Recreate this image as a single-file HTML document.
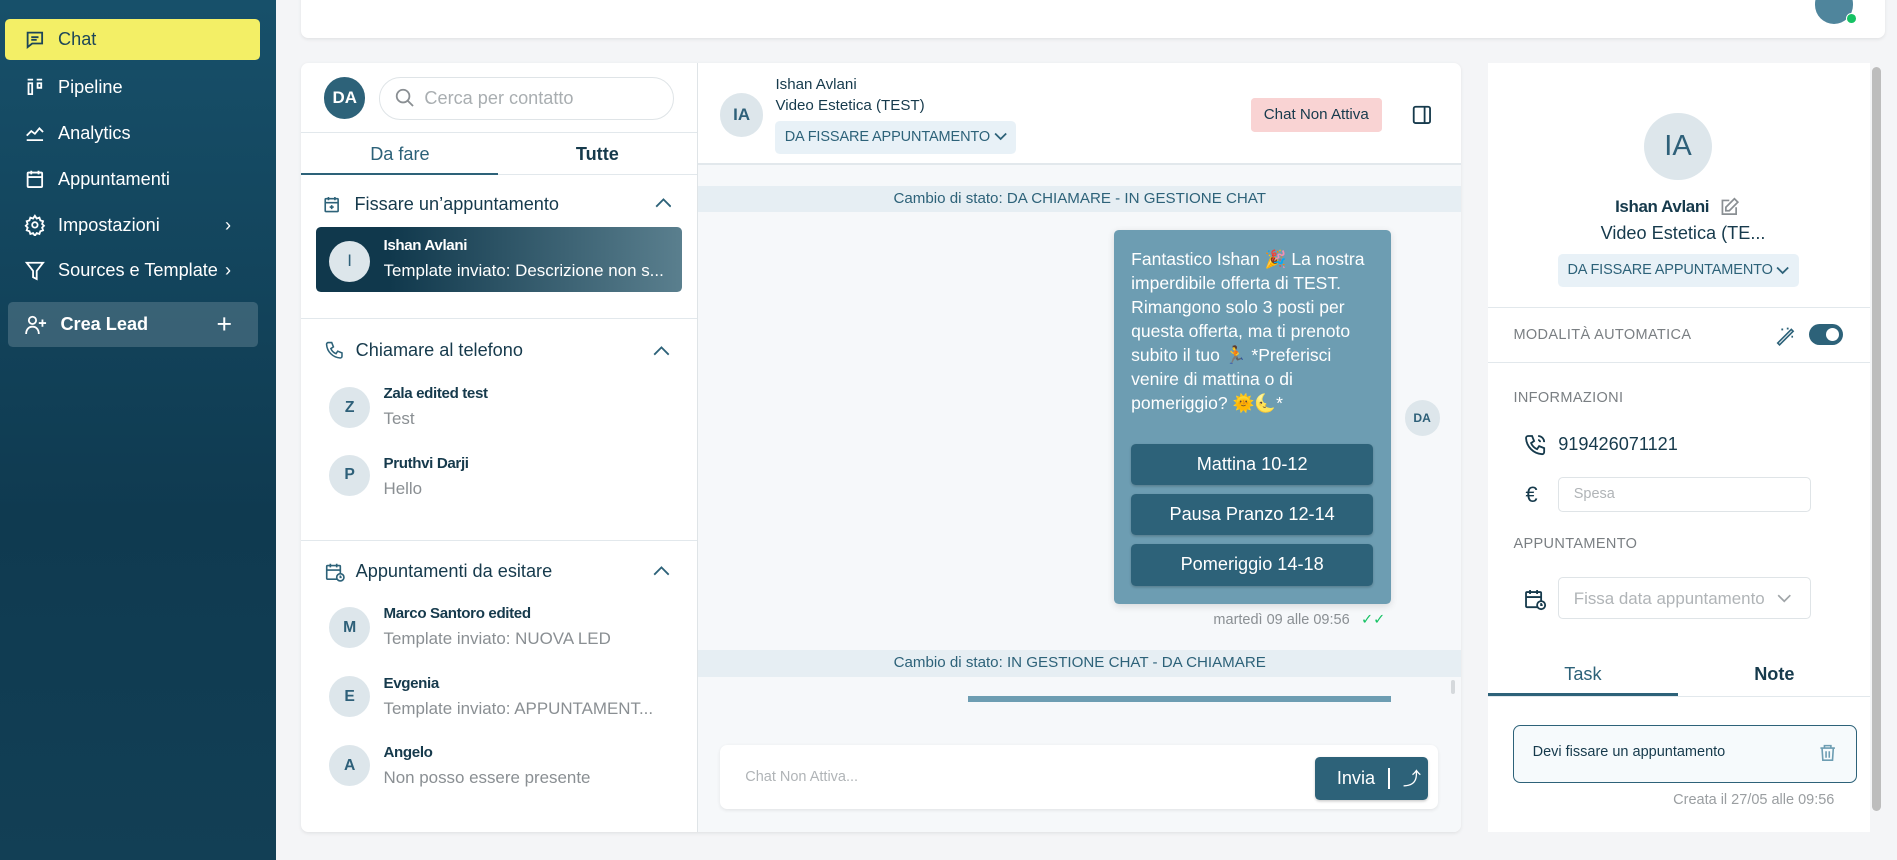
<!DOCTYPE html>
<html><head><meta charset="utf-8"><style>
*{box-sizing:border-box;margin:0;padding:0}
html,body{width:1897px;height:860px;overflow:hidden;background:#f4f5f7}
#r{zoom:1.2098;width:1568px;height:711px;position:relative;font-family:"Liberation Sans",sans-serif;color:#163a4c}
.a{position:absolute;white-space:nowrap}
.side{left:0;top:0;width:228px;height:711px;background:linear-gradient(180deg,#17506a,#0f3a50 60%,#123f55)}
.nav{left:4px;width:211px;height:34px;display:flex;align-items:center;padding-left:16px;color:#fff;font-size:15px}
.nav svg{margin-right:10px}
.card{background:#fff;border-radius:6px;box-shadow:0 1px 3px rgba(0,0,0,.08)}
.av{border-radius:50%;background:#dde6eb;color:#2e6079;display:flex;align-items:center;justify-content:center;font-weight:bold}
.ln{background:#e2e8ec}
.nm{font-weight:bold;font-size:12.5px;color:#163a4c;letter-spacing:-.3px}
.sub{font-size:14px;color:#8a8f93}
.btn{background:#2d6279;color:#fff;border-radius:4px;display:flex;align-items:center;justify-content:center;font-size:15px;box-shadow:0 1px 2px rgba(0,0,0,.2)}
.lab{font-size:12px;color:#7a7f83;letter-spacing:.3px}
.pill{height:27px;background:#e8f1f7;border-radius:4px;font-size:12px;color:#2d6279;display:flex;align-items:center;justify-content:center;gap:3px;letter-spacing:-.1px}
</style></head><body><div id="r">
<div class="a side"></div>
<div class="a nav" style="top:16px;background:#f3ef66;border-radius:4px;color:#1d4658">
<svg width="18" height="18" viewBox="0 0 24 24" fill="none" stroke="#1d4658" stroke-width="2"><path d="M4 4h16v12H9l-5 4z"/><path d="M8 9h8M8 12h6"/></svg>Chat</div>
<div class="a nav" style="top:55px"><svg width="18" height="18" viewBox="0 0 24 24" fill="none" stroke="#fff" stroke-width="2"><path d="M4 4h6M14 4h6M5 8h4v12H5zM15 8h4v5h-4z"/></svg>Pipeline</div>
<div class="a nav" style="top:93px"><svg width="18" height="18" viewBox="0 0 24 24" fill="none" stroke="#fff" stroke-width="2"><path d="M3 15l5-5 4 3 5-6 4 4M3 20h18"/></svg>Analytics</div>
<div class="a nav" style="top:131px"><svg width="18" height="18" viewBox="0 0 24 24" fill="none" stroke="#fff" stroke-width="2"><rect x="4" y="5" width="16" height="16" rx="1"/><path d="M4 10h16M8 3v4M16 3v4"/></svg>Appuntamenti</div>
<div class="a nav" style="top:169px"><svg width="18" height="18" viewBox="0 0 24 24" fill="none" stroke="#fff" stroke-width="2"><circle cx="12" cy="12" r="3"/><path d="M12 2l2 3 3-1 1 3 3 1-1 3 2 2-2 2 1 3-3 1-1 3-3-1-2 3-2-3-3 1-1-3-3-1 1-3-2-2 2-2-1-3 3-1 1-3 3 1z"/></svg>Impostazioni<span style="position:absolute;left:182px">›</span></div>
<div class="a nav" style="top:207px"><svg width="18" height="18" viewBox="0 0 24 24" fill="none" stroke="#fff" stroke-width="2"><path d="M3 3h18l-7 9v9l-4-2v-7z"/></svg>Sources e Template<span style="position:absolute;left:182px">›</span></div>
<div class="a nav" style="top:250px;left:7px;width:206px;height:37px;background:rgba(255,255,255,.17);border-radius:4px;padding-left:13px"><svg width="20" height="18" viewBox="0 0 26 24" fill="none" stroke="#fff" stroke-width="2"><circle cx="9" cy="7" r="4"/><path d="M2 22c0-5 3-8 7-8s7 3 7 8M20 6v8M16 10h8"/></svg><span style="font-weight:bold">Crea Lead</span><span style="position:absolute;left:172px;font-size:22px;font-weight:300">+</span></div>

<div class="a card" style="left:249px;top:-8px;width:1309px;height:39px"></div>
<div class="a" style="left:1500px;top:-12px;width:32px;height:32px;border-radius:50%;background:#4f859c"></div>
<div class="a" style="left:1526px;top:11px;width:9px;height:9px;border-radius:50%;background:#16c264;border:1px solid #fff"></div>

<div class="a card" style="left:249px;top:52px;width:959px;height:636px"></div>
<div class="a av" style="left:268px;top:64px;width:34px;height:34px;background:#2d6279;color:#fff;font-size:14px">DA</div>
<div class="a" style="left:313px;top:64px;width:244px;height:35px;border:1px solid #dfe4e7;border-radius:18px;font-size:15px;color:#a9aeb1;padding:8px 0 0 37px">Cerca per contatto</div>
<svg class="a" style="left:326px;top:72px" width="18" height="18" viewBox="0 0 24 24" fill="none" stroke="#8a8f93" stroke-width="2"><circle cx="10" cy="10" r="7"/><path d="M15 15l6 6"/></svg>
<div class="a ln" style="left:249px;top:109px;width:327px;height:1px"></div>
<div class="a" style="left:306px;top:119px;font-size:15px;color:#2d6279">Da fare</div>
<div class="a" style="left:476px;top:119px;font-size:15px;font-weight:bold">Tutte</div>
<div class="a ln" style="left:249px;top:144px;width:327px;height:1px"></div>
<div class="a" style="left:249px;top:143px;width:163px;height:2px;background:#2d6279"></div>
<svg class="a" style="left:266px;top:160px" width="16" height="17" viewBox="0 0 24 24" fill="none" stroke="#2d6279" stroke-width="2"><rect x="4" y="5" width="16" height="16" rx="1"/><path d="M4 10h16M8 3v4M16 3v4M12 13v5M9.5 15.5h5"/></svg>
<div class="a" style="left:293px;top:160px;font-size:15px">Fissare un’appuntamento</div>
<svg class="a" style="left:541px;top:163px" width="14" height="10" viewBox="0 0 14 10" fill="none" stroke="#2d6279" stroke-width="1.5"><path d="M1 8l6-6 6 6"/></svg>
<div class="a" style="left:261px;top:188px;width:303px;height:53px;border-radius:4px;background:linear-gradient(90deg,#10384c 20%,#5a7f8e)"></div>
<div class="a av" style="left:272px;top:199px;width:34px;height:34px;font-size:14px;font-weight:normal">I</div>
<div class="a nm" style="left:317px;top:196px;color:#fff">Ishan Avlani</div>
<div class="a" style="left:317px;top:216px;font-size:14px;color:#fff;width:234px;overflow:hidden;text-overflow:ellipsis">Template inviato: Descrizione non s...</div>
<div class="a ln" style="left:249px;top:263px;width:327px;height:1px"></div>
<svg class="a" style="left:268px;top:281px" width="17" height="17" viewBox="0 0 24 24" fill="none" stroke="#2d6279" stroke-width="1.8"><path d="M5 3h4l2 5-3 2a11 11 0 0 0 6 6l2-3 5 2v4a2 2 0 0 1-2 2A17 17 0 0 1 3 5a2 2 0 0 1 2-2"/></svg>
<div class="a" style="left:294px;top:281px;font-size:15px">Chiamare al telefono</div>
<svg class="a" style="left:540px;top:285px" width="14" height="10" viewBox="0 0 14 10" fill="none" stroke="#2d6279" stroke-width="1.5"><path d="M1 8l6-6 6 6"/></svg>
<div class="a av" style="left:272px;top:320px;width:34px;height:34px;font-size:13px">Z</div>
<div class="a nm" style="left:317px;top:318px">Zala edited test</div><div class="a sub" style="left:317px;top:338px">Test</div>
<div class="a av" style="left:272px;top:376px;width:34px;height:34px;font-size:13px">P</div>
<div class="a nm" style="left:317px;top:376px">Pruthvi Darji</div><div class="a sub" style="left:317px;top:396px">Hello</div>
<div class="a ln" style="left:249px;top:446px;width:327px;height:1px"></div>
<svg class="a" style="left:268px;top:464px" width="18" height="18" viewBox="0 0 24 24" fill="none" stroke="#2d6279" stroke-width="1.8"><rect x="3" y="5" width="15" height="15" rx="1"/><path d="M3 10h15M7 3v4M14 3v4"/><circle cx="18" cy="18" r="4" fill="#fff"/><path d="M18 16v2h1.5"/></svg>
<div class="a" style="left:294px;top:464px;font-size:15px">Appuntamenti da esitare</div>
<svg class="a" style="left:540px;top:467px" width="14" height="10" viewBox="0 0 14 10" fill="none" stroke="#2d6279" stroke-width="1.5"><path d="M1 8l6-6 6 6"/></svg>
<div class="a av" style="left:272px;top:502px;width:34px;height:34px;font-size:13px">M</div>
<div class="a nm" style="left:317px;top:500px">Marco Santoro edited</div><div class="a sub" style="left:317px;top:520px">Template inviato: NUOVA LED</div>
<div class="a av" style="left:272px;top:559px;width:34px;height:34px;font-size:13px">E</div>
<div class="a nm" style="left:317px;top:558px">Evgenia</div><div class="a sub" style="left:317px;top:578px">Template inviato: APPUNTAMENT...</div>
<div class="a av" style="left:272px;top:616px;width:34px;height:34px;font-size:13px">A</div>
<div class="a nm" style="left:317px;top:615px">Angelo</div><div class="a sub" style="left:317px;top:635px">Non posso essere presente</div>
<div class="a" style="left:576px;top:52px;width:1px;height:636px;background:#dfe4e7"></div>

<div class="a" style="left:577px;top:136px;width:631px;height:552px;background:#f6f8fa;border-radius:0 0 6px 0"></div>
<div class="a av" style="left:595px;top:77px;width:36px;height:36px;font-size:14px">IA</div>
<div class="a" style="left:641px;top:63px;font-size:12.5px">Ishan Avlani</div>
<div class="a" style="left:641px;top:80px;font-size:12.5px">Video Estetica (TEST)</div>
<div class="a pill" style="left:641px;top:100px;width:199px">DA FISSARE APPUNTAMENTO<svg width="11" height="8" viewBox="0 0 12 8" fill="none" stroke="#2d6279" stroke-width="1.6"><path d="M1 1l5 5 5-5"/></svg></div>
<div class="a" style="left:1034px;top:81px;width:108px;height:28px;background:#f9d3d3;border-radius:3px;font-size:12.5px;display:flex;align-items:center;justify-content:center">Chat Non Attiva</div>
<svg class="a" style="left:1166px;top:86px" width="18" height="18" viewBox="0 0 24 24" fill="none" stroke="#163a4c" stroke-width="2"><rect x="3" y="3" width="18" height="18" rx="2"/><path d="M15 3v18"/></svg>
<div class="a ln" style="left:577px;top:135px;width:631px;height:1px"></div>
<div class="a" style="left:577px;top:154px;width:631px;height:21px;background:#e6eef3;text-align:center;font-size:12.5px;color:#2d6279;padding-top:3px">Cambio di stato: DA CHIAMARE - IN GESTIONE CHAT</div>
<div class="a" style="left:921px;top:190px;width:229px;height:309px;background:#6d9db2;border-radius:4px;box-shadow:0 2px 6px rgba(0,0,0,.12)"></div>
<div class="a" style="left:935px;top:205px;width:205px;font-size:14.5px;line-height:19.8px;color:#fff;white-space:normal">Fantastico Ishan 🎉 La nostra imperdibile offerta di TEST. Rimangono solo 3 posti per questa offerta, ma ti prenoto subito il tuo 🏃 *Preferisci venire di mattina o di pomeriggio? 🌞🌜*</div>
<div class="a btn" style="left:935px;top:367px;width:200px;height:34px">Mattina 10-12</div>
<div class="a btn" style="left:935px;top:408px;width:200px;height:34px">Pausa Pranzo 12-14</div>
<div class="a btn" style="left:935px;top:450px;width:200px;height:34px">Pomeriggio 14-18</div>
<div class="a av" style="left:1161px;top:331px;width:29px;height:29px;font-size:10px">DA</div>
<div class="a" style="left:1003px;top:506px;font-size:12px;color:#8a8f93">martedì 09 alle 09:56 <span style="color:#16c264;margin-left:6px">✓✓</span></div>
<div class="a" style="left:577px;top:537px;width:631px;height:23px;background:#e6eef3;text-align:center;font-size:12.5px;color:#2d6279;padding-top:4px">Cambio di stato: IN GESTIONE CHAT - DA CHIAMARE</div>
<div class="a" style="left:800px;top:575px;width:350px;height:5px;background:#6d9db2"></div>
<div class="a" style="left:1199px;top:562px;width:4px;height:12px;border-radius:2px;background:#d5d9dc"></div>
<div class="a card" style="left:595px;top:616px;width:594px;height:53px"></div>
<div class="a" style="left:616px;top:636px;font-size:12px;color:#b0b4b7">Chat Non Attiva...</div>
<div class="a btn" style="left:1087px;top:626px;width:93px;height:35px;justify-content:flex-start;padding-left:18px">Invia<span style="display:inline-block;width:1px;height:18px;background:#fff;margin:0 11px"></span>⤴</div>

<div class="a" style="left:1230px;top:52px;width:316px;height:636px;background:#fff"></div>
<div class="a" style="left:1547px;top:55px;width:8px;height:615px;border-radius:4px;background:#bdbdbd"></div>
<div class="a av" style="left:1359px;top:93px;width:56px;height:56px;font-size:24px;font-weight:normal">IA</div>
<div class="a" style="left:1335px;top:163px;font-size:14px;font-weight:bold;letter-spacing:-.3px">Ishan Avlani</div>
<svg class="a" style="left:1421px;top:163px" width="17" height="17" viewBox="0 0 24 24" fill="none" stroke="#8a8f93" stroke-width="2"><path d="M12 4H4v16h16v-8"/><path d="M18 2l4 4-10 10H8v-4z"/></svg>
<div class="a" style="left:1323px;top:184px;font-size:15px">Video Estetica (TE...</div>
<div class="a pill" style="left:1288px;top:210px;width:199px">DA FISSARE APPUNTAMENTO<svg width="11" height="8" viewBox="0 0 12 8" fill="none" stroke="#2d6279" stroke-width="1.6"><path d="M1 1l5 5 5-5"/></svg></div>
<div class="a ln" style="left:1230px;top:254px;width:316px;height:1px"></div>
<div class="a lab" style="left:1251px;top:270px">MODALITÀ AUTOMATICA</div>
<svg class="a" style="left:1467px;top:268px" width="18" height="18" viewBox="0 0 24 24" fill="none" stroke="#2d6279" stroke-width="1.8"><path d="M3 21L18 6l2 2L5 23zM14 4v2M8 5v2M19 13v2M7 6h2M13 5h2"/></svg>
<div class="a" style="left:1495px;top:268px;width:28px;height:17px;border-radius:9px;background:#2d6279"></div>
<div class="a" style="left:1509px;top:271px;width:11px;height:11px;border-radius:50%;background:#fff"></div>
<div class="a ln" style="left:1230px;top:299px;width:316px;height:1px"></div>
<div class="a lab" style="left:1251px;top:322px">INFORMAZIONI</div>
<svg class="a" style="left:1259px;top:358px" width="20" height="20" viewBox="0 0 24 24" fill="none" stroke="#163a4c" stroke-width="1.8"><path d="M5 3h4l2 5-3 2a11 11 0 0 0 6 6l2-3 5 2v4a2 2 0 0 1-2 2A17 17 0 0 1 3 5a2 2 0 0 1 2-2M15 3a6 6 0 0 1 6 6M15 7a2 2 0 0 1 2 2"/></svg>
<div class="a" style="left:1288px;top:359px;font-size:15px">919426071121</div>
<div class="a" style="left:1261px;top:398px;font-size:18px">€</div>
<div class="a" style="left:1288px;top:394px;width:209px;height:29px;border:1px solid #dfe4e7;border-radius:4px;font-size:12px;color:#b0b4b7;padding:7px 0 0 12px">Spesa</div>
<div class="a lab" style="left:1251px;top:443px">APPUNTAMENTO</div>
<svg class="a" style="left:1259px;top:485px" width="20" height="20" viewBox="0 0 24 24" fill="none" stroke="#163a4c" stroke-width="1.8"><rect x="3" y="5" width="15" height="15" rx="1"/><path d="M3 10h15M7 3v4M14 3v4"/><circle cx="18" cy="18" r="4" fill="#fff"/><path d="M18 16v2h1.5"/></svg>
<div class="a" style="left:1288px;top:477px;width:209px;height:35px;border:1px solid #dfe4e7;border-radius:4px;font-size:14px;color:#b0b4b7;padding:9px 0 0 12px">Fissa data appuntamento</div>
<svg class="a" style="left:1469px;top:491px" width="12" height="8" viewBox="0 0 12 8" fill="none" stroke="#a0a5a8" stroke-width="1.4"><path d="M1 1l5 5 5-5"/></svg>
<div class="a" style="left:1293px;top:549px;font-size:15px;color:#2d6279">Task</div>
<div class="a" style="left:1450px;top:549px;font-size:15px;font-weight:bold">Note</div>
<div class="a ln" style="left:1230px;top:575px;width:316px;height:1px"></div>
<div class="a" style="left:1230px;top:573px;width:157px;height:2px;background:#2d6279"></div>
<div class="a" style="left:1251px;top:599px;width:284px;height:48px;border:1px solid #2d6279;border-radius:6px;background:#f6fafc;font-size:12px;padding:15px 0 0 15px">Devi fissare un appuntamento</div>
<svg class="a" style="left:1503px;top:613px" width="16" height="18" viewBox="0 0 24 24" fill="none" stroke="#6d9db2" stroke-width="2"><path d="M3 6h18M8 6V3h8v3M5 6l1 15h12l1-15M10 10v8M14 10v8"/></svg>
<div class="a" style="left:1383px;top:655px;font-size:12px;color:#9a9ea1">Creata il 27/05 alle 09:56</div>
</div></body></html>
